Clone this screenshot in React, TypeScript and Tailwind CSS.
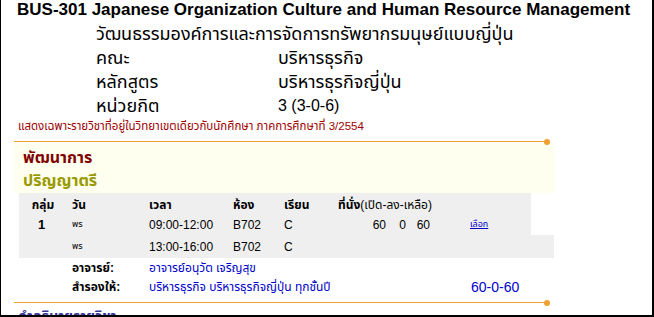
const thai = "font-['Liberation_Sans','Noto_Sans_Thai','Tahoma',sans-serif]";

const cols = [
  { w: "w-[48px]", cls: "text-center" },
  { w: "w-[77px]", cls: "pl-[5px]" },
  { w: "w-[84px]", cls: "pl-[5px]" },
  { w: "w-[51px]", cls: "pl-[5px]" },
  { w: "w-[54px]", cls: "pl-[5px]" },
  { w: "w-[128px]", cls: "pl-[5px]" },
  { w: "w-[70px]", cls: "pl-[9px]" },
];

function OrangeRule() {
  return (
    <div className="ml-[13px] flex h-px w-[536px] items-center">
      <div className="h-px flex-1 bg-[#f0a030]" />
      <div className="size-[6px] shrink-0 rounded-full bg-[#f0a030]" />
    </div>
  );
}

function Seats() {
  return (
    <div className="flex text-[12px]">
      <span className="w-[48px] text-right">60</span>
      <span className="w-[20px] text-right">0</span>
      <span className="w-[24px] text-right">60</span>
    </div>
  );
}

export default function App() {
  return (
    <div className={`h-[317px] w-[654px] overflow-hidden border-b-2 border-l border-r-2 border-black bg-white text-black ${thai}`}>
      <h1 className="pl-[16px] text-[17px] font-bold leading-[20px]">
        BUS-301 Japanese Organization Culture and Human Resource Management
      </h1>
      <div className="mt-[2px] pl-[95px] text-[18px] leading-[24px]">
        <p>วัฒนธรรมองค์การและการจัดการทรัพยากรมนุษย์แบบญี่ปุ่น</p>
        {[
          ["คณะ", "บริหารธุรกิจ"],
          ["หลักสูตร", "บริหารธุรกิจญี่ปุ่น"],
        ].map(([k, v]) => (
          <div key={k} className="flex">
            <span className="w-[182px]">{k}</span>
            <span>{v}</span>
          </div>
        ))}
        <div className="flex">
          <span className="w-[182px]">หน่วยกิต</span>
          <span className="text-[16px]">3 (3-0-6)</span>
        </div>
      </div>
      <p className="pl-[17px] text-[11.5px] leading-[17px] text-[#a00000]">
        แสดงเฉพาะรายวิชาที่อยู่ในวิทยาเขตเดียวกับนักศึกษา ภาคการศึกษาที่ 3/2554
      </p>
      <div className="mt-[6px]">
        <OrangeRule />
      </div>
      <div className="ml-[13px] mt-px w-[541px] bg-[#ffffef] pb-px pl-[9px] pt-[3px] text-[16px] font-bold leading-[23px]">
        <p className="text-[#800000]">พัฒนาการ</p>
        <p className="text-[#999900]">ปริญญาตรี</p>
      </div>

      <div className="ml-[18px] text-[12px]">
        <div className="flex h-[22px] w-[512px] items-center bg-[#efefef] pt-[2px] text-[12px] font-bold">
          {["กลุ่ม", "วัน", "เวลา", "ห้อง", "เรียน"].map((t, i) => (
            <span key={t} className={`${cols[i].w} ${cols[i].cls}`}>{t}</span>
          ))}
          <span className={`${cols[5].w} ${cols[5].cls} whitespace-nowrap`}>
            ที่นั่ง<span className="font-normal">(เปิด-ลง-เหลือ)</span>
          </span>
        </div>
        <div className="flex h-[20px] w-[512px] items-center bg-[#efefef]">
          <span className={`${cols[0].w} pl-[19px] text-[13px] font-bold`}>1</span>
          <span className={`${cols[1].w} ${cols[1].cls} text-[9px]`}>พร</span>
          <span className={`${cols[2].w} ${cols[2].cls}`}>09:00-12:00</span>
          <span className={`${cols[3].w} ${cols[3].cls}`}>B702</span>
          <span className={`${cols[4].w} ${cols[4].cls}`}>C</span>
          <span className={`${cols[5].w} ${cols[5].cls}`}><Seats /></span>
          <span className={`${cols[6].w} ${cols[6].cls} text-[9px] text-[#0000cc] underline`}>เลือก</span>
        </div>
        <div className="flex h-[23px] w-[535px] items-center bg-[#efefef]">
          <span className={`${cols[0].w}`} />
          <span className={`${cols[1].w} ${cols[1].cls} text-[9px]`}>พร</span>
          <span className={`${cols[2].w} ${cols[2].cls}`}>13:00-16:00</span>
          <span className={`${cols[3].w} ${cols[3].cls}`}>B702</span>
          <span className={`${cols[4].w} ${cols[4].cls}`}>C</span>
        </div>
        <div className="mt-px text-[12px] leading-[19px]">
          <div className="flex">
            <span className="w-[48px]" />
            <span className="w-[82px] pl-[5px] font-bold">อาจารย์:</span>
            <span className="text-[#0000cc]">อาจารย์อนุวัต เจริญสุข</span>
          </div>
          <div className="flex items-center">
            <span className="w-[48px]" />
            <span className="w-[82px] pl-[5px] font-bold">สำรองให้:</span>
            <span className="w-[322px] text-[#0000cc]">บริหารธุรกิจ บริหารธุรกิจญี่ปุ่น ทุกชั้นปี</span>
            <span className="text-[14px] text-[#0000cc]">60-0-60</span>
          </div>
        </div>
      </div>
      <div className="mt-[5px]">
        <OrangeRule />
      </div>
      <p className="mt-[4px] pl-[17px] text-[14px] font-bold leading-[18px] text-[#333399]">คำอธิบายรายวิชา</p>
    </div>
  );
}
